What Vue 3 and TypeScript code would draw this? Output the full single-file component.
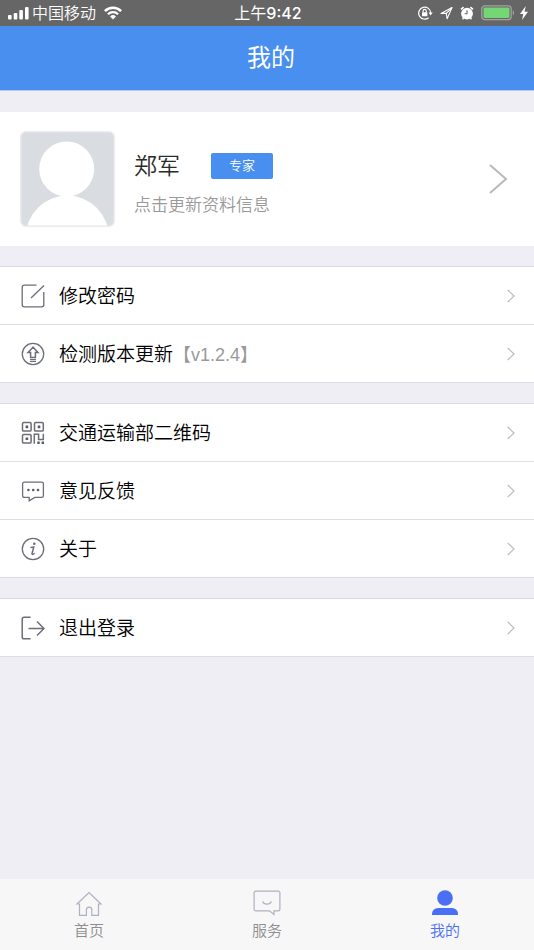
<script setup lang="ts">
import { ref } from 'vue'

type IconName = 'edit' | 'update' | 'qrcode' | 'feedback' | 'about' | 'logout'

interface MenuItem {
  icon: IconName
  label: string
  note?: string
}

interface Tab {
  id: string
  label: string
}

const groups: MenuItem[][] = [
  [
    { icon: 'edit', label: '修改密码' },
    { icon: 'update', label: '检测版本更新', note: '【v1.2.4】' },
  ],
  [
    { icon: 'qrcode', label: '交通运输部二维码' },
    { icon: 'feedback', label: '意见反馈' },
    { icon: 'about', label: '关于' },
  ],
  [{ icon: 'logout', label: '退出登录' }],
]

const tabs: Tab[] = [
  { id: 'home', label: '首页' },
  { id: 'service', label: '服务' },
  { id: 'mine', label: '我的' },
]

const activeTab = ref('mine')
</script>

<template>
  <div class="screen">
    <div class="status">
      <div class="status-left">
        <svg width="22" height="14" viewBox="0 0 22 14" fill="#fff">
          <rect x="0" y="9" width="3.6" height="4.6" rx="1" />
          <rect x="5.7" y="7" width="3.6" height="6.6" rx="1" />
          <rect x="11.3" y="4" width="3.6" height="9.6" rx="1" />
          <rect x="17" y="1" width="3.6" height="12.6" rx="1" />
        </svg>
        <span class="carrier">中国移动</span>
        <svg width="18" height="14" viewBox="0 0 18 14" fill="none" stroke="#fff">
          <path d="M.9 5.1a11.6 11.6 0 0 1 16.2 0" stroke-width="2.5" />
          <path d="M3.9 8.3a7.3 7.3 0 0 1 10.2 0" stroke-width="2.2" />
          <path d="M9 13.4 6 10.4a4.3 4.3 0 0 1 6 0Z" fill="#fff" stroke="none" />
        </svg>
      </div>
      <span class="time">上午<span class="clock">9:42</span></span>
      <div class="status-right">
        <svg width="15" height="14" viewBox="0 0 15 14" fill="none" stroke="#fff" stroke-width="1.2">
          <path d="M10.6 11.7A6 6 0 1 1 12.7 7" />
          <path d="M10.5 6.6h4.2l-2.1 2.8z" fill="#fff" stroke="none" />
          <rect x="4" y="6.2" width="5.4" height="4.1" rx=".5" fill="#fff" stroke="none" />
          <path d="M5.1 6.5V5a1.6 1.6 0 0 1 3.2 0v1.5" />
        </svg>
        <svg width="13" height="14" viewBox="0 0 13 14" fill="none" stroke="#fff" stroke-width="1.1" stroke-linejoin="round">
          <path d="M12 1.6 1 7.4h5.3l.8 5.3z" />
          <path d="M12 1.6 6.3 7.4" />
        </svg>
        <svg width="14" height="14" viewBox="0 0 14 14">
          <circle cx="7" cy="7.6" r="5.9" fill="#fff" />
          <path d="M1 3.4 3.6 1.2M13 3.4l-2.6-2.2M3.4 12l-.8 1.2M10.6 12l.8 1.2" stroke="#fff" stroke-width="1.6" />
          <path d="M7 4.2v3.6H4.6" fill="none" stroke="#666" stroke-width="1.1" />
        </svg>
        <svg class="battery" width="34" height="16" viewBox="0 0 34 16">
          <rect x=".8" y=".8" width="29.4" height="13.8" rx="3" fill="none" stroke="#a3a3a3" stroke-width="1.3" />
          <rect x="2.5" y="2.4" width="26" height="10.6" rx="1.4" fill="#75d773" />
          <path d="M31.8 5.2c1.8.8 1.8 4.2 0 5z" fill="#a3a3a3" />
        </svg>
        <svg width="8" height="14" viewBox="0 0 8 14" fill="#fff">
          <path d="M5.8 0 0 8h3.3L2 14l6-8.3H4.5z" />
        </svg>
      </div>
    </div>

    <header class="header"><h1>我的</h1></header>

    <main class="main">
      <button class="profile" type="button">
        <svg width="95" height="96" viewBox="0 0 95 96">
          <defs>
            <clipPath id="avatar-clip"><rect x="1.5" y="1.5" width="92" height="93" rx="4" /></clipPath>
          </defs>
          <rect x=".75" y=".75" width="93.5" height="94.5" rx="5" fill="#d9dce1" stroke="#ececee" stroke-width="1.5" />
          <g clip-path="url(#avatar-clip)" fill="#fff">
            <circle cx="46.7" cy="38" r="27.5" />
            <circle cx="47.3" cy="106" r="41.5" />
          </g>
        </svg>
        <span class="info">
          <span class="name-row">
            <span class="name">郑军</span>
            <span class="badge">专家</span>
          </span>
          <span class="hint">点击更新资料信息</span>
        </span>
        <svg width="20" height="32" viewBox="0 0 20 32" fill="none" stroke="#b9b9b9" stroke-width="2">
          <path d="m2 2 16 14L2 30" />
        </svg>
      </button>

      <section v-for="(group, index) in groups" :key="index" class="group">
        <button v-for="item in group" :key="item.icon" class="row" type="button">
          <svg width="24" height="24" viewBox="0 0 24 24" fill="none" stroke="#6c6e78" stroke-width="1.3">
            <template v-if="item.icon === 'edit'">
              <path d="M15.5 1.2H3.2a2 2 0 0 0-2 2v17.6a2 2 0 0 0 2 2h17.6a2 2 0 0 0 2-2V8" />
              <path d="M10 14 23 1.5" />
            </template>
            <template v-else-if="item.icon === 'update'">
              <circle cx="12" cy="12" r="10.7" />
              <path d="M12 5.2 7 10.5h2.6v5h4.8v-5H17z" stroke-width="1.5" />
              <path d="M9 17.6h6M9 19.5h6" stroke-width="1.2" />
            </template>
            <template v-else-if="item.icon === 'qrcode'">
              <g stroke-width="1.5">
                <rect x="1.5" y="1.5" width="8.6" height="8.6" rx="1.2" />
                <rect x="13.5" y="1.5" width="8.8" height="8.6" rx="1.2" />
                <rect x="1.5" y="13.5" width="8.6" height="8.6" rx="1.2" />
                <path d="M13.3 22.8v-9.5h4.3v5.2h4.7v-5.8" />
              </g>
              <path d="M4.6 4.6h2.6v2.6H4.6zM16.7 4.6h2.6v2.6h-2.6zM4.6 16.5h2.6v2.6H4.6zM16.3 20.6h2.4V23h-2.4zM20.6 20.6H23V23h-2.4z" fill="#595b64" stroke="none" />
            </template>
            <template v-else-if="item.icon === 'feedback'">
              <path d="M3.2 3.2h17.6a1.6 1.6 0 0 1 1.6 1.6v12a1.6 1.6 0 0 1-1.6 1.6h-7L8.2 21.8v-3.4h-5a1.6 1.6 0 0 1-1.6-1.6v-12a1.6 1.6 0 0 1 1.6-1.6z" />
              <g fill="#595b64" stroke="none">
                <circle cx="7.4" cy="11" r="1.3" />
                <circle cx="12.2" cy="11" r="1.3" />
                <circle cx="17" cy="11" r="1.3" />
              </g>
            </template>
            <template v-else-if="item.icon === 'about'">
              <circle cx="12" cy="12" r="10.7" />
              <circle cx="13.3" cy="6.8" r="1.3" fill="#6c6e78" stroke="none" />
              <path d="M9.5 10.7c1.2-.6 2.2-.8 3.3-.8l-1.7 6.3c-.4 1.6.6 1.7 2.5.1" stroke-width="1.5" />
            </template>
            <template v-else>
              <path d="M9.6 1.2H3A1.8 1.8 0 0 0 1.2 3v18A1.8 1.8 0 0 0 3 22.8h6.6" stroke-width="1.5" />
              <path d="M7.5 12.5h15.3M16 5.5l7 7-7 7" stroke-width="1.5" />
            </template>
          </svg>
          <span class="label">{{ item.label }}</span>
          <span v-if="item.note" class="note">{{ item.note }}</span>
          <svg class="chevron" width="8" height="14" viewBox="0 0 8 14" fill="none" stroke="#bcbcc0" stroke-width="1.2">
            <path d="m.7 1 6.3 6-6.3 6" />
          </svg>
        </button>
      </section>
    </main>

    <nav class="tabs">
      <button
        v-for="tab in tabs"
        :key="tab.id"
        class="tab"
        :class="{ active: tab.id === activeTab }"
        type="button"
        @click="activeTab = tab.id"
      >
        <svg width="28" height="28" viewBox="0 0 28 28" fill="none" stroke="#b0b0c2" stroke-width="1.2">
          <path v-if="tab.id === 'home'" d="M4.5 14H2L14 2.5 26 14h-2.5v11.3h-6.7v-5.5a2.7 2.7 0 0 0-5.4 0v5.5H4.5z" />
          <template v-else-if="tab.id === 'service'">
            <path d="M2.8 1.2h22.4a1.7 1.7 0 0 1 1.7 1.7v16.3a1.7 1.7 0 0 1-1.7 1.7H21v3.6l-4.5-3.6H2.8a1.7 1.7 0 0 1-1.7-1.7V2.9a1.7 1.7 0 0 1 1.7-1.7z" />
            <path d="M9.5 11.5c1.5 3.6 7.5 3.6 9 0" />
          </template>
          <g v-else fill="#4a6ff5" stroke="none">
            <circle cx="14" cy="8" r="7.8" />
            <path d="M1 25v-1.5A6 6 0 0 1 7 18h14a6 6 0 0 1 6 5.5V25z" />
          </g>
        </svg>
        <span>{{ tab.label }}</span>
      </button>
    </nav>
  </div>
</template>

<style>
body {
  margin: 0;
}
</style>

<style scoped>
.screen {
  display: flex;
  flex-direction: column;
  min-height: 100vh;
  background: #efeef4;
  font-family: "Liberation Sans", "Noto Sans CJK SC", sans-serif;
  font-weight: 350;
}

button {
  margin: 0;
  padding: 0;
  border: 0;
  background: none;
  font: inherit;
  color: inherit;
  text-align: left;
  cursor: pointer;
}

svg {
  display: block;
  flex: none;
}

.status {
  display: grid;
  grid-template-columns: 1fr auto 1fr;
  align-items: center;
  height: 26px;
  padding: 0 6px 0 8px;
  background: #666;
  color: #fff;
  font-family: Inter, "Noto Sans CJK SC", sans-serif;
  font-size: 16px;
  line-height: 26px;
}

.status-left,
.status-right {
  display: flex;
  align-items: center;
}

.carrier {
  margin: 0 8px 0 2px;
}

.time {
  font-weight: 400;
}

.clock {
  font-weight: 500;
}

.status-right {
  justify-content: flex-end;
  gap: 7px;
}

.battery {
  margin-right: -2px;
}

.header {
  display: flex;
  align-items: center;
  justify-content: center;
  height: 64px;
  padding-left: 8px;
  border-bottom: 1px solid #b9c6e6;
  background: #488ff0;
  color: #fff;
}

.header h1 {
  margin: 0;
  font-size: 24px;
  font-weight: 400;
  line-height: 32px;
}

.main {
  display: flex;
  flex: 1;
  flex-direction: column;
  gap: 20px;
  padding: 21px 0;
}

.profile {
  display: flex;
  align-items: center;
  width: 100%;
  height: 134px;
  padding: 0 26px 0 20px;
  background: #fff;
}

.info {
  display: flex;
  flex: 1;
  flex-direction: column;
  gap: 12px;
  padding: 10px 0 0 19px;
}

.name-row {
  display: flex;
  align-items: center;
  gap: 31px;
}

.name {
  color: #2b2b2b;
  font-size: 23px;
  line-height: 32px;
}

.badge {
  padding: 0 18px;
  border-radius: 2px;
  background: #488ff0;
  color: #fff;
  font-size: 13px;
  line-height: 26px;
}

.hint {
  color: #999;
  font-size: 17px;
  line-height: 24px;
}

.group {
  border-top: 1px solid #d9d9de;
}

.row {
  display: flex;
  align-items: center;
  width: 100%;
  height: 58px;
  padding: 0 19px 0 21px;
  border-bottom: 1px solid #dedee2;
  background: #fff;
}

.label,
.note {
  padding-top: 2px;
  line-height: 28px;
}

.label {
  margin-left: 14px;
  color: #000;
  font-size: 19px;
}

.note {
  color: #999;
  font-size: 18px;
}

.chevron {
  margin-left: auto;
}

.tabs {
  display: grid;
  grid-template-columns: repeat(3, 1fr);
  height: 71px;
  background: #f7f7f7;
}

.tab {
  display: flex;
  flex-direction: column;
  align-items: center;
  gap: 2px;
  padding-top: 11px;
  color: #8e8e8e;
  font-size: 15px;
  line-height: 22px;
}

.tab.active {
  color: #4a6ff5;
}
</style>
